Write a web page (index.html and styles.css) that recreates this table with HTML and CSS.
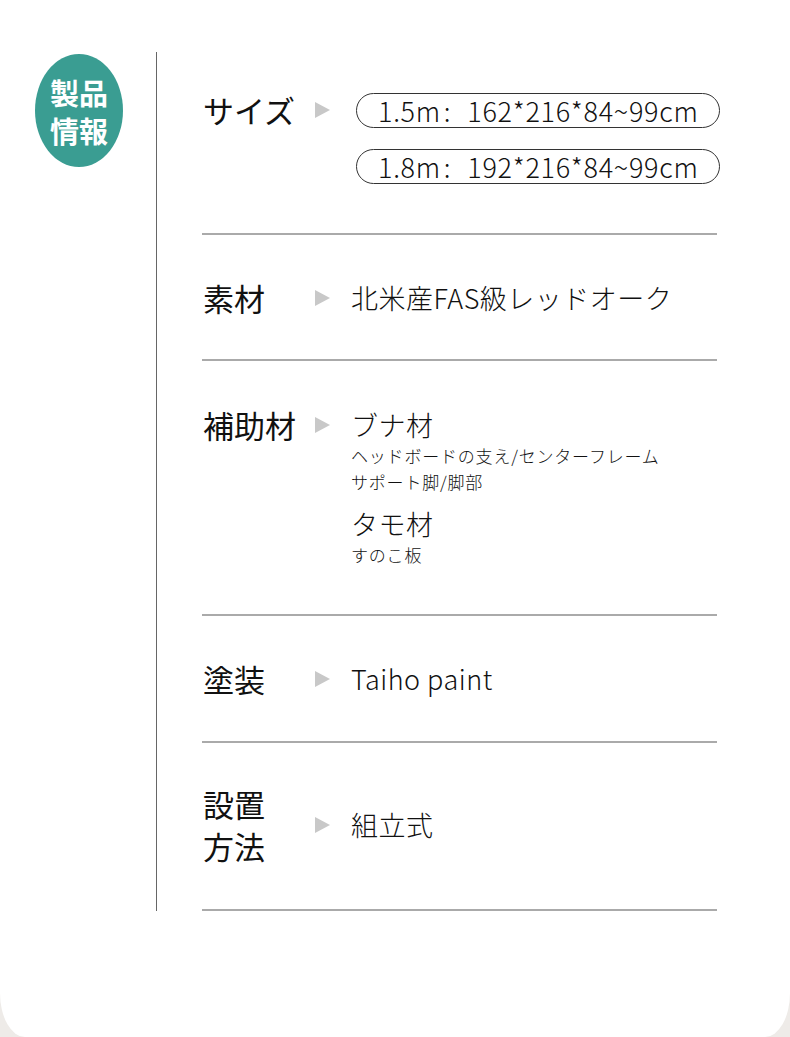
FILE: index.html
```html
<!DOCTYPE html>
<html lang="ja">
<head>
<meta charset="utf-8">
<link rel="stylesheet" href="styles.css">
</head>
<body>
<div class="card">
  <div class="side">
    <div class="badge"><span>製品</span><span>情報</span></div>
  </div>
  <div class="main">
    <div class="row row-size">
      <div class="label">サイズ</div>
      <div class="arrow"><i></i></div>
      <div class="value">
        <div class="pill">1.5m<span class="colon">:</span>162*216*84~99cm</div>
        <div class="pill">1.8m<span class="colon">:</span>192*216*84~99cm</div>
      </div>
    </div>
    <div class="row row-material">
      <div class="label">素材</div>
      <div class="arrow"><i></i></div>
      <div class="value"><div class="big">北米産FAS級レッドオーク</div></div>
    </div>
    <div class="row row-sub">
      <div class="label">補助材</div>
      <div class="arrow"><i></i></div>
      <div class="value">
        <div class="big">ブナ材</div>
        <div class="small">ヘッドボードの支え/センターフレーム</div>
        <div class="small">サポート脚/脚部</div>
        <div class="big gap">タモ材</div>
        <div class="small">すのこ板</div>
      </div>
    </div>
    <div class="row row-paint">
      <div class="label">塗装</div>
      <div class="arrow"><i></i></div>
      <div class="value"><div class="big">Taiho paint</div></div>
    </div>
    <div class="row row-install">
      <div class="label two">設置<br>方法</div>
      <div class="arrow"><i></i></div>
      <div class="value"><div class="big">組立式</div></div>
    </div>
  </div>
</div>
</body>
</html>
```

FILE: styles.css
```css
html, body {
  margin: 0;
  padding: 0;
}
body {
  background: #eeebe8;
  font-family: "Noto Sans CJK JP", "Noto Sans", sans-serif;
  color: #111;
}
.card {
  width: 790px;
  height: 1037px;
  background: #fff;
  border-bottom-left-radius: 25px 44px;
  border-bottom-right-radius: 25px 44px;
  display: flex;
  align-items: flex-start;
  padding-top: 52px;
  box-sizing: border-box;
}
.side {
  width: 156px;
  flex: none;
}
.badge {
  margin: 2px 0 0 35px;
  width: 88px;
  height: 113px;
  border-radius: 50%;
  background: #3a9d92;
  color: #fff;
  font-weight: 700;
  font-size: 29px;
  line-height: 38px;
  display: flex;
  flex-direction: column;
  align-items: center;
  justify-content: center;
}
.main {
  width: 515px;
  border-left: 1.5px solid #666;
  padding-left: 45px;
  flex: none;
}
.row {
  display: grid;
  grid-template-columns: 113px 36px 1fr;
  align-items: start;
  border-bottom: 2px solid #aaa;
}
.label {
  font-size: 31px;
  font-weight: 400;
  line-height: 36px;
  padding-left: 1px;
  white-space: nowrap;
}
.label.two {
  line-height: 42px;
}
.arrow {
  height: 36px;
  display: flex;
  align-items: center;
}
.arrow i {
  display: block;
  width: 0;
  height: 0;
  border-left: 15px solid #c8c8c8;
  border-top: 8.5px solid transparent;
  border-bottom: 8.5px solid transparent;
}
.value {
  display: flex;
  flex-direction: column;
  align-items: flex-start;
  font-weight: 300;
}
.big {
  font-size: 27px;
  line-height: 36px;
  letter-spacing: 0.5px;
  white-space: nowrap;
}
.big.gap {
  margin-top: 11px;
}
.small {
  font-size: 17px;
  line-height: 26px;
  letter-spacing: 0.8px;
  white-space: nowrap;
}
.pill {
  width: 364px;
  height: 35px;
  box-sizing: border-box;
  margin-left: 5px;
  border: 1px solid #333;
  border-radius: 18px;
  padding-left: 21px;
  font-size: 27px;
  line-height: 33px;
  letter-spacing: 0.7px;
  white-space: nowrap;
}
.colon {
  margin: 0 16px 0 3px;
}
.pill + .pill {
  margin-top: 21px;
}
.row-size {
  padding: 40px 0 49px;
}
.row-size .value {
  padding-top: 1px;
}
.row-material {
  padding: 45px 0 43px;
}
.row-sub {
  padding: 46px 0 46px;
}
.row-paint {
  padding: 45px 0 44px;
}
.row-install {
  padding: 40px 0 42px;
  align-items: center;
}
```
